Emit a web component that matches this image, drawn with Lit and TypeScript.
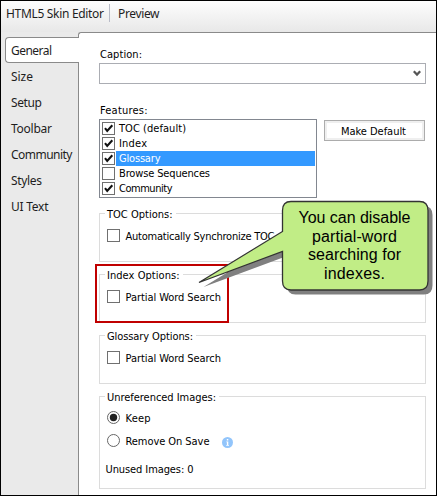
import { LitElement, html, css, svg, nothing } from "lit";
import { customElement, property } from "lit/decorators.js";

/* A single line of text, tracked so that it fills a given width. */
@customElement("fit-label")
class FitLabel extends LitElement {
  @property({ type: Number }) w = 0;
  @property() text = "";
  static styles = css`
    :host { display: inline-block; white-space: nowrap; }
  `;
  render() {
    return html`<span>${this.text}</span>`;
  }
  updated() {
    const s = this.renderRoot.querySelector("span")!;
    s.style.letterSpacing = "0px";
    const n = s.getBoundingClientRect().width;
    if (this.w && n) s.style.letterSpacing = (this.w - n) / (this.text.length - 1) + "px";
  }
}

const label = (text: string, w: number) => html`<fit-label .text=${text} .w=${w}></fit-label>`;

@customElement("check-box")
class CheckBox extends LitElement {
  @property({ type: Boolean }) checked = false;
  static styles = css`
    :host { display: block; width: 13px; height: 13px; flex: none; }
    svg { display: block; }
  `;
  render() {
    return html`<svg width="13" height="13" viewBox="0 0 13 13">
      <rect x=".5" y=".5" width="12" height="12" fill="#fff" stroke="#707070"></rect>
      ${this.checked
        ? svg`<path d="M3 6.2 L5.2 8.9 L10.3 3.3" fill="none" stroke="#111" stroke-width="2.1"></path>`
        : nothing}
    </svg>`;
  }
}

@customElement("radio-dot")
class RadioDot extends LitElement {
  @property({ type: Boolean }) checked = false;
  static styles = css`
    :host { display: block; width: 13px; height: 13px; flex: none; }
    svg { display: block; }
  `;
  render() {
    return html`<svg width="13" height="13" viewBox="0 0 13 13">
      <circle cx="6.5" cy="6.5" r="6" fill="#fff" stroke="#666"></circle>
      ${this.checked ? svg`<circle cx="6.5" cy="6.5" r="3.7" fill="#222"></circle>` : nothing}
    </svg>`;
  }
}

@customElement("app-root")
class AppRoot extends LitElement {
  static styles = css`
    :host {
      display: flex; flex-direction: column; position: relative; box-sizing: border-box;
      width: 437px; height: 496px; border: 1px solid #000; overflow: hidden;
      background: #eaeaea; color: #000;
      font: 11px/14px "DejaVu Sans Condensed", "DejaVu Sans", sans-serif;
    }
    .bar {
      height: 31px; flex: none; display: flex; box-sizing: border-box; padding: 3px 0 0 5px;
      background: linear-gradient(#fdfdfd, #e8e8e8);
      font: 12px/20px "Noto Sans", sans-serif; color: #1e1e1e;
    }
    .sep { width: 1px; height: 18px; background: #b9bcc8; margin: 0 8px 0 6px; }
    .bar fit-label:first-child { width: 97px; }
    .body { flex: 1; display: flex; min-height: 0; }
    .tabs {
      width: 77px; flex: none; box-sizing: border-box; padding: 5px 0 0 4px;
      font: 12px/28px "Noto Sans", sans-serif; color: #1e1e1e; z-index: 1;
    }
    .tab { height: 26px; padding-left: 6px; box-sizing: border-box; }
    .tab.on {
      width: 74px; background: #fff; border: 1px solid #8a8a8a; border-right: 0;
      border-radius: 4px 0 0 4px; padding-left: 5px; line-height: 26px;
    }
    .panel {
      flex: 1; box-sizing: border-box; background: #fff; padding: 14px 10px 0 20px;
      border: solid #8a8a8a; border-width: 1px 0 0 1px; border-top-left-radius: 3px;
    }
    .cap { height: 16px; box-sizing: border-box; padding: 1px 0 0 1px; }
    .combo {
      height: 21px; box-sizing: border-box; border: 1px solid #abadb3; width: 327px;
      display: flex; justify-content: flex-end; align-items: center; padding-right: 4px;
    }
    .combo svg { display: block; }
    .cap.feat { margin-top: 19px; height: 15px; padding-top: 1px; }
    .row { display: flex; justify-content: space-between; width: 326px; height: 79px; align-items: flex-start; margin-top: 1px; }
    .list { width: 218px; height: 79px; box-sizing: border-box; border: 1px solid #828790; padding: 1px 1px 0 2px; }
    .item { display: flex; height: 15px; align-items: center; }
    .item span { flex: 1; height: 15px; margin-left: 1px; padding-left: 3px; line-height: 15px; }
    .item.sel span { background: #3399ff; color: #fff; }
    .btn {
      width: 101px; height: 21px; box-sizing: border-box; margin-top: 1px; border: 1px solid #acacac;
      box-shadow: inset 0 0 0 2px #efefef; line-height: 21px; padding-left: 16px;
    }
    .group { box-sizing: border-box; width: 327px; height: 49px; border: 1px solid #dcdcdc; margin-top: 12px; }
    .group.first { margin-top: 15px; }
    .group.tall { height: 93px; }
    .legend { display: table; background: #fff; margin: -6px 0 0 5px; padding: 0 3px 0 2px; height: 14px; }
    .opt { display: flex; align-items: center; height: 15px; gap: 5.5px; margin: 6px 0 0 7px; }
    .opt fit-label { padding-top: 2px; }
    .opt.keep { margin-top: 5px; }
    .opt.rem { margin-top: 8px; }
    .info { margin: 3px 0 0 7px; display: block; }
    .unused { margin: 15px 0 0 5.5px; }
    .mark { position: absolute; left: 94px; top: 263px; width: 134px; height: 59px; box-sizing: border-box; border: 2px solid #c00000; z-index: 2; }
    .callout { position: absolute; left: 190px; top: 190px; width: 245px; height: 110px; z-index: 3; }
    .callout svg { position: absolute; left: 0; top: 0; display: block; }
    .msg {
      position: absolute; left: 90.5px; top: 18px; width: 146px; text-align: center;
      font: 16px/18.6px "Liberation Sans", Arial, sans-serif;
    }
  `;

  render() {
    const tabs: [string, number][] = [
      ["General", 41], ["Size", 22], ["Setup", 31], ["Toolbar", 41], ["Community", 61.5], ["Styles", 31], ["UI Text", 37.5],
    ];
    const items: [string, number, boolean, boolean][] = [
      ["TOC (default)", 67, true, false], ["Index", 28, true, false], ["Glossary", 41.5, true, true],
      ["Browse Sequences", 91, false, false], ["Community", 53.5, true, false],
    ];
    const groups: [string, number, string, number][] = [
      ["TOC Options:", 65.5, "Automatically Synchronize TOC", 149],
      ["Index Options:", 72.5, "Partial Word Search", 95.5],
      ["Glossary Options:", 86, "Partial Word Search", 95.5],
    ];
    const msg: [string, number][] = [
      ["You can disable", 112], ["partial-word", 85], ["searching for", 93], ["indexes.", 61],
    ];
    const bubble =
      "M100 10.5 H228.5 Q237 10.5 237 19.5 V90 Q237 99 228.5 99 H100 Q91.5 99 91.5 90 V60.5 L8 91.5 L91.5 40.5 V19.5 Q91.5 10.5 100 10.5 Z";
    return html`
      <div class="bar">
        ${label("HTML5 Skin Editor", 98)}
        <div class="sep"></div>
        ${label("Preview", 41.5)}
      </div>
      <div class="body">
        <div class="tabs">
          ${tabs.map(([t, w], i) => html`<div class="tab ${i ? "" : "on"}">${label(t, w)}</div>`)}
        </div>
        <div class="panel">
          <div class="cap">${label("Caption:", 42)}</div>
          <div class="combo">
            <svg width="8" height="7" viewBox="0 0 8 7"><path d="M.8 1.2 L4 4.6 L7.2 1.2" fill="none" stroke="#555" stroke-width="2.2"></path></svg>
          </div>
          <div class="cap feat">${label("Features:", 47.5)}</div>
          <div class="row">
            <div class="list">
              ${items.map(
                ([t, w, c, s]) => html`<div class="item ${s ? "sel" : ""}">
                  <check-box ?checked=${c}></check-box><span>${label(t, w)}</span>
                </div>`
              )}
            </div>
            <div class="btn">${label("Make Default", 65)}</div>
          </div>
          ${groups.map(
            ([t, w, o, ow], i) => html`<div class="group ${i ? "" : "first"}">
              <div class="legend">${label(t, w)}</div>
              <div class="opt"><check-box></check-box>${label(o, ow)}</div>
            </div>`
          )}
          <div class="group tall">
            <div class="legend">${label("Unreferenced Images:", 109)}</div>
            <div class="opt keep"><radio-dot checked></radio-dot>${label("Keep", 25)}</div>
            <div class="opt rem">
              <radio-dot></radio-dot>${label("Remove On Save", 84)}
              <svg class="info" width="11" height="11" viewBox="0 0 11 11">
                <circle cx="5.5" cy="5.5" r="5.5" fill="#92c5fb"></circle>
                <path d="M4.3 4.6 H6.3 V8 H7 V8.8 H4.2 V8 H4.9 V5.3 H4.3 Z M4.8 2.1 H6.3 V3.5 H4.8 Z" fill="#fff"></path>
              </svg>
            </div>
            <div class="unused">${label("Unused Images: 0", 88)}</div>
          </div>
        </div>
      </div>
      <div class="mark"></div>
      <div class="callout">
        <svg width="245" height="110" viewBox="0 0 245 110">
          <path d=${bubble} fill="#808080" transform="translate(4.5 4.5)"></path>
          <path d=${bubble} fill="#c1ed86" stroke="#333" stroke-width="1.3"></path>
        </svg>
        <div class="msg">${msg.map(([t, w]) => html`<div>${label(t, w)}</div>`)}</div>
      </div>
    `;
  }
}
